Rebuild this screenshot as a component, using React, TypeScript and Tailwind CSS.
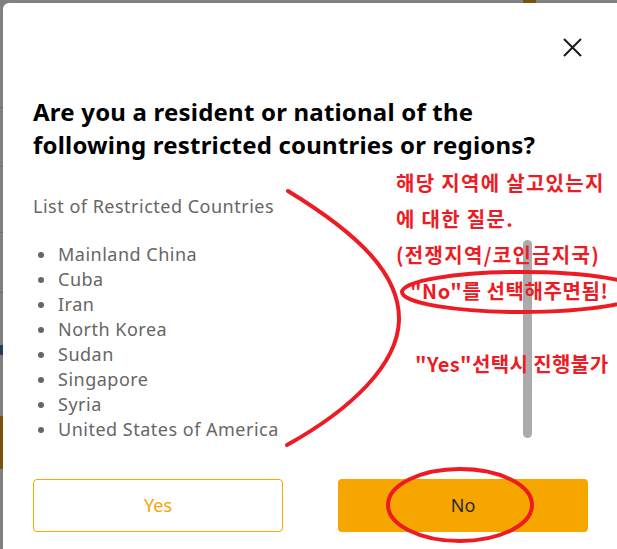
import React from 'react';

const countries = [
  'Mainland China',
  'Cuba',
  'Iran',
  'North Korea',
  'Sudan',
  'Singapore',
  'Syria',
  'United States of America',
];

const latin = { fontFamily: '"Noto Sans", "Noto Sans CJK KR", sans-serif' };
const korean = { fontFamily: '"Noto Sans CJK KR", "Noto Sans", sans-serif' };

// Red marker notes drawn over the screenshot
function Annotations() {
  return (
    <div className="pointer-events-none absolute inset-0" style={korean}>
      <svg className="absolute inset-0" width="617" height="549" viewBox="0 0 617 549" fill="none">
        <path
          d="M288 191 C 360 235, 400 275, 399 320 C 398 365, 350 410, 287 445"
          stroke="#ed1c24"
          strokeWidth="4"
          strokeLinecap="round"
        />
        <ellipse cx="522" cy="292" rx="120" ry="20" stroke="#ed1c24" strokeWidth="4" />
        <ellipse cx="460" cy="505" rx="72" ry="36" stroke="#ed1c24" strokeWidth="4" />
      </svg>
      <div className="absolute left-[396px] top-[165px] flex flex-col whitespace-nowrap text-[20px] font-bold leading-[36px] tracking-[1.3px] text-[#ed1c24]">
        <span>해당 지역에 살고있는지</span>
        <span>에 대한 질문.</span>
        <span>(전쟁지역/코인금지국)</span>
        <span className="pl-[14px] tracking-[0.6px]">"No"를 선택해주면됨!</span>
      </div>
      <div className="absolute left-[415px] top-[346px] whitespace-nowrap text-[20px] font-bold leading-[36px] tracking-[0.4px] text-[#ed1c24]">
        "Yes"선택시 진행불가
      </div>
    </div>
  );
}

export default function App() {
  return (
    <div className="relative flex h-[549px] w-[617px] flex-col overflow-hidden bg-[#808080]" style={latin}>
      {/* page behind the backdrop, top edge */}
      <div className="flex h-[3px] shrink-0">
        <div className="ml-[523px] w-[13px] bg-[#7a5208]" />
      </div>

      <div className="flex flex-1">
        {/* page behind the backdrop, left edge */}
        <div className="flex w-[3px] shrink-0 flex-col">
          <div className="mt-[104px] h-px bg-[#6e6e6e]" />
          <div className="mt-[58px] h-px bg-[#6e6e6e]" />
          <div className="mt-[65px] h-px bg-[#6e6e6e]" />
          <div className="mt-[59px] h-px bg-[#6e6e6e]" />
          <div className="mt-[52px] h-[10px] bg-[#243b5a]" />
          <div className="mt-[61px] h-[53px] bg-[#7a5208]" />
        </div>

        {/* modal */}
        <div className="relative w-[615px] shrink-0 rounded-tl-[6px] bg-white px-[30px]">
          <div className="flex justify-end pt-[35px]">
            <button className="mr-[6px] flex h-[19px] w-[19px] items-center justify-center text-[#1a1a1a]">
              <svg width="19" height="19" viewBox="0 0 19 19" fill="none" stroke="currentColor" strokeWidth="2">
                <path d="M1 1 L18 18 M18 1 L1 18" />
              </svg>
            </button>
          </div>

          <h2 className="mt-[38px] text-[24px] font-bold leading-[33px] tracking-[0.2px] text-black">
            Are you a resident or national of the
            <br />
            following restricted countries or regions?
          </h2>

          <p className="mt-[33px] text-[18px] leading-[25px] tracking-[0.5px] text-[#666]">
            List of Restricted Countries
          </p>

          <ul className="mt-[23px] flex flex-col">
            {countries.map((c) => (
              <li key={c} className="flex items-center text-[18px] leading-[25px] tracking-[0.5px] text-[#666]">
                <span className="ml-[5px] mr-[14px] h-[6px] w-[6px] rounded-full bg-[#666]" />
                {c}
              </li>
            ))}
          </ul>

          <div className="mt-[37px] flex gap-[55px]">
            <button className="h-[53px] w-[250px] rounded-[4px] border border-[#f5a800] text-[18px] text-[#f5a500]">
              Yes
            </button>
            <button className="h-[53px] w-[250px] rounded-[4px] bg-[#f7a600] text-[18px] text-[#2a2a2a]">
              No
            </button>
          </div>

          {/* scrollbar thumb */}
          <div className="absolute left-[520px] top-[237px] h-[198px] w-[9px] rounded-full bg-[#ababab]" />
        </div>
      </div>

      <Annotations />
    </div>
  );
}
